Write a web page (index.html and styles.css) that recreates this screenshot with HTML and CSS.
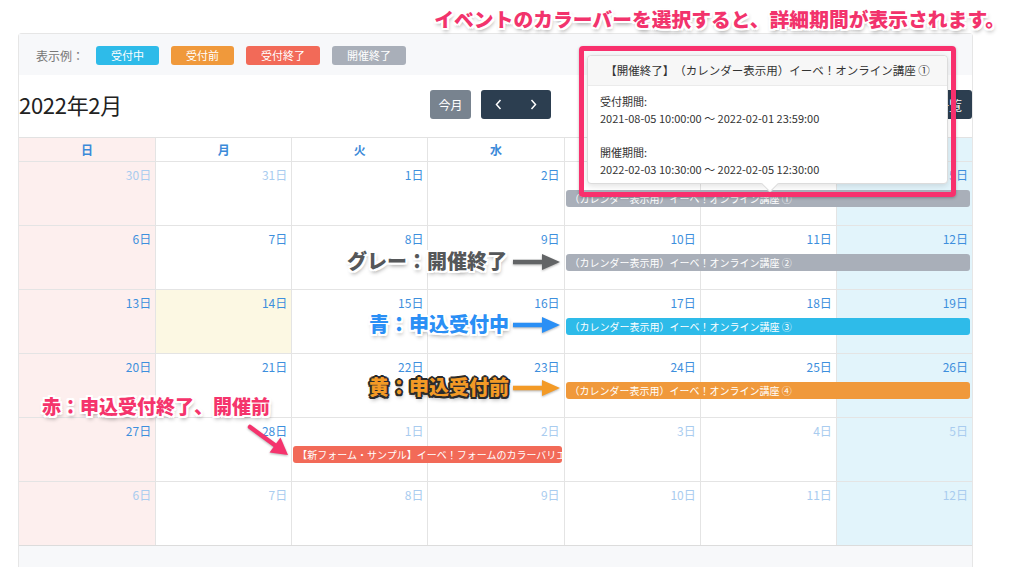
FILE: index.html
```html
<!DOCTYPE html>
<html lang="ja">
<head>
<meta charset="utf-8">
<title>カレンダー</title>
<link rel="stylesheet" href="styles.css">
</head>
<body>
<div class="page">
  <p class="note-top">イベントのカラーバーを選択すると、詳細期間が表示されます。</p>
  <div class="panel">
    <div class="legend">
      <span class="legend-label">表示例：</span>
      <span class="badge c-open">受付中</span>
      <span class="badge c-before">受付前</span>
      <span class="badge c-closed">受付終了</span>
      <span class="badge c-ended">開催終了</span>
    </div>
    <div class="toolbar">
      <h1 class="title">2022年2月</h1>
      <div class="tb-center">
        <button class="btn btn-today">今月</button>
        <div class="btn-group">
          <button class="btn btn-dark btn-nav"><svg width="7" height="11" viewBox="0 0 7 11"><path d="M5.5 1 L1.5 5.5 L5.5 10" fill="none" stroke="#fff" stroke-width="1.5"/></svg></button>
          <button class="btn btn-dark btn-nav"><svg width="7" height="11" viewBox="0 0 7 11"><path d="M1.5 1 L5.5 5.5 L1.5 10" fill="none" stroke="#fff" stroke-width="1.5"/></svg></button>
        </div>
      </div>
      <div class="tb-right"><button class="btn btn-dark btn-list">一覧</button></div>
    </div>
    <div class="calendar">
      <div class="dow">
        <div class="dow-cell sun">日</div><div class="dow-cell">月</div><div class="dow-cell">火</div><div class="dow-cell">水</div><div class="dow-cell">木</div><div class="dow-cell">金</div><div class="dow-cell sat">土</div>
      </div>
      <div class="week">
        <div class="day sun other">30日</div><div class="day other">31日</div><div class="day">1日</div><div class="day">2日</div><div class="day">3日</div><div class="day">4日</div><div class="day sat">5日</div>
        <div class="event c-ended ev-5-8">（カレンダー表示用）イーベ！オンライン講座 ①</div>
      </div>
      <div class="week">
        <div class="day sun">6日</div><div class="day">7日</div><div class="day">8日</div><div class="day">9日</div><div class="day">10日</div><div class="day">11日</div><div class="day sat">12日</div>
        <div class="event c-ended ev-5-8">（カレンダー表示用）イーベ！オンライン講座 ②</div>
      </div>
      <div class="week">
        <div class="day sun">13日</div><div class="day today">14日</div><div class="day">15日</div><div class="day">16日</div><div class="day">17日</div><div class="day">18日</div><div class="day sat">19日</div>
        <div class="event c-open ev-5-8">（カレンダー表示用）イーベ！オンライン講座 ③</div>
      </div>
      <div class="week">
        <div class="day sun">20日</div><div class="day">21日</div><div class="day">22日</div><div class="day">23日</div><div class="day">24日</div><div class="day">25日</div><div class="day sat">26日</div>
        <div class="event c-before ev-5-8">（カレンダー表示用）イーベ！オンライン講座 ④</div>
      </div>
      <div class="week">
        <div class="day sun">27日</div><div class="day">28日</div><div class="day other">1日</div><div class="day other">2日</div><div class="day other">3日</div><div class="day other">4日</div><div class="day sat other">5日</div>
        <div class="event c-closed ev-3-5">【新フォーム・サンプル】イーベ！フォームのカラーバリエーション</div>
      </div>
      <div class="week">
        <div class="day sun other">6日</div><div class="day other">7日</div><div class="day other">8日</div><div class="day other">9日</div><div class="day other">10日</div><div class="day other">11日</div><div class="day sat other">12日</div>
      </div>
    </div>
    <div class="panel-foot"></div>
  </div>

  <div class="popover">
    <div class="popover-head">【開催終了】（カレンダー表示用）イーベ！オンライン講座 ①</div>
    <div class="popover-body">
      <p>受付期間:</p>
      <p>2021-08-05 10:00:00 〜 2022-02-01 23:59:00</p>
      <p class="blank">&nbsp;</p>
      <p>開催期間:</p>
      <p>2022-02-03 10:30:00 〜 2022-02-05 12:30:00</p>
    </div>
    <span class="popover-arrow"></span>
  </div>
  <div class="frame"></div>

  <p class="anno anno-gray">グレー：開催終了</p>
  <p class="anno anno-blue">青：申込受付中</p>
  <p class="anno anno-yellow">黄：申込受付前</p>
  <p class="anno anno-red">赤：申込受付終了、開催前</p>

  <svg class="arrow arrow-gray" width="48" height="18" viewBox="0 0 48 18"><path d="M0 9 H32" stroke="#626466" stroke-width="4.5"/><path d="M29 1 L47 9 L29 17 Z" fill="#626466"/></svg>
  <svg class="arrow arrow-blue" width="48" height="18" viewBox="0 0 48 18"><path d="M0 9 H32" stroke="#2a8ff5" stroke-width="4.5"/><path d="M29 1 L47 9 L29 17 Z" fill="#2a8ff5"/></svg>
  <svg class="arrow arrow-orange" width="48" height="18" viewBox="0 0 48 18"><path d="M0 9 H32" stroke="#f39a26" stroke-width="4.5"/><path d="M29 1 L47 9 L29 17 Z" fill="#f39a26"/></svg>
  <svg class="arrow arrow-pink" width="50" height="40" viewBox="0 0 50 40"><path d="M6 7 L32 26" stroke="#f5336d" stroke-width="4.5" stroke-linecap="round"/><path d="M44 35 L25.5 32.5 L36.5 17.5 Z" fill="#f5336d"/></svg>
</div>
</body>
</html>
```

FILE: styles.css
```css
* { box-sizing: border-box; margin: 0; padding: 0; }
body { margin: 0; background: #fff; font-family: "Noto Sans CJK JP", "Noto Sans", sans-serif; color: #333; text-spacing-trim: space-all; }
.page { position: relative; width: 1024px; height: 567px; overflow: hidden; }

.note-top {
  height: 33px; padding-top: 7px; padding-right: 19px; text-align: right;
  font-size: 19.8px; line-height: 24px; font-weight: 900; color: #f2336c; white-space: nowrap;
  text-shadow: -2px -2px 0 #fff, 0 -2px 0 #fff, 2px -2px 0 #fff, 2px 0 0 #fff, 2px 2px 0 #fff, 0 2px 0 #fff, -2px 2px 0 #fff, -2px 0 0 #fff, 1px 3px 4px rgba(0,0,0,.45);
}

.panel { margin-left: 18px; width: 955px; height: 560px; border: 1px solid #e6e6e6; border-bottom: 0; border-radius: 4px 4px 0 0; }

.legend { height: 41px; background: #f7f8fa; display: flex; align-items: center; gap: 12px; padding-left: 17px; padding-top: 1px; }
.legend-label { font-size: 12px; color: #777; margin-right: 0; }
.badge { height: 19px; line-height: 19px; padding: 0 15px; border-radius: 3px; font-size: 11px; color: #fff; }
.c-open { background: #2ebbe9; }
.c-before { background: #f0993b; }
.c-closed { background: #f26a58; }
.c-ended { background: #a9afb9; }

.toolbar { height: 62px; display: grid; grid-template-columns: 1fr auto 1fr; align-items: center; padding-bottom: 4px; }
.title { font-size: 22px; font-weight: 400; color: #222; letter-spacing: -0.3px; }
.tb-center { display: flex; gap: 10px; margin-right: 10px; }
.tb-right { display: flex; justify-content: flex-end; }
.btn { height: 29px; border: 0; border-radius: 3px; font-family: inherit; font-size: 12px; color: #fff; display: flex; align-items: center; justify-content: center; }
.btn-today { width: 41px; background: #78838f; }
.btn-group { display: flex; border-radius: 3px; overflow: hidden; }
.btn-dark { background: #2c3e50; }
.btn-nav { width: 35px; border-radius: 0; }
.btn-list { padding: 0 10px; font-size: 13px; }

.calendar { border-top: 1px solid #e2e2e2; }
.dow { display: grid; grid-template-columns: repeat(7, 1fr); height: 23px; }
.dow-cell { text-align: center; font-size: 12px; font-weight: 700; color: #3b8ad9; line-height: 23px; border-left: 1px solid #e4e4e4; }
.dow-cell:first-child { border-left: 0; }
.sun { background: #fdefee; }
.sat { background: #e2f4fb; }

.week { display: grid; grid-template-columns: repeat(7, 1fr); grid-template-rows: 28px 17px 1fr; height: 64px; border-top: 1px solid #e4e4e4; }
.day { grid-row: 1 / -1; border-left: 1px solid #e4e4e4; text-align: right; padding: 5px 4px 0 0; font-size: 12px; line-height: 16px; color: #3d8fdd; }
.day:first-child { border-left: 0; }
.day:nth-child(1) { grid-column: 1; }
.day:nth-child(2) { grid-column: 2; }
.day:nth-child(3) { grid-column: 3; }
.day:nth-child(4) { grid-column: 4; }
.day:nth-child(5) { grid-column: 5; }
.day:nth-child(6) { grid-column: 6; }
.day:nth-child(7) { grid-column: 7; }
.day.other { color: #a9ccef; }
.day.today { background: #fcf8e3; }

.event { grid-row: 2; margin: 0 2px; border-radius: 3px; color: #fff; font-size: 10px; line-height: 17px; padding-left: 4px; white-space: nowrap; overflow: hidden; }
.ev-5-8 { grid-column: 5 / 8; }
.ev-3-5 { grid-column: 3 / 5; }

.panel-foot { height: 40px; background: #f7f8fa; border-top: 1px solid #dcdcdc; }

.popover { position: absolute; left: 587px; top: 55px; width: 361px; height: 129px; background: #fff; border: 1px solid #dcdcdc; border-radius: 4px; box-shadow: 0 2px 6px rgba(0,0,0,.12); }
.popover-head { height: 30px; line-height: 29px; background: #f7f7f7; border-bottom: 1px solid #ebebeb; border-radius: 4px 4px 0 0; text-align: center; font-size: 11.5px; color: #333; white-space: nowrap; }
.popover-body { padding: 7px 12px 8px; font-size: 11px; line-height: 17px; color: #333; }
.popover-arrow { position: absolute; left: 176px; bottom: -7px; width: 12px; height: 12px; background: #fff; border-right: 1px solid #dcdcdc; border-bottom: 1px solid #dcdcdc; transform: rotate(45deg); }

.frame { position: absolute; left: 579px; top: 46px; width: 377px; height: 151px; border: 5px solid #f8306d; border-radius: 4px; box-shadow: 0 1px 3px rgba(0,0,0,.25); }

.anno { position: absolute; font-weight: 900; white-space: nowrap; font-size: 20px; line-height: 22px; }
.anno-gray, .anno-blue, .anno-red {
  text-shadow: -2px -2px 0 #fff, 0 -2px 0 #fff, 2px -2px 0 #fff, 2px 0 0 #fff, 2px 2px 0 #fff, 0 2px 0 #fff, -2px 2px 0 #fff, -2px 0 0 #fff, 1px 3px 4px rgba(0,0,0,.45);
}
.anno-gray { left: 347px; top: 250px; color: #555759; }
.anno-blue { left: 369px; top: 313px; color: #2a8ff5; }
.anno-yellow { left: 369px; top: 376px; color: #f39a26;
  text-shadow: -1.5px -1.5px 0 #2b2b2b, 0 -2px 0 #2b2b2b, 1.5px -1.5px 0 #2b2b2b, 2px 0 0 #2b2b2b, 1.5px 1.5px 0 #2b2b2b, 0 2px 0 #2b2b2b, -1.5px 1.5px 0 #2b2b2b, -2px 0 0 #2b2b2b, 1px 3px 4px rgba(0,0,0,.4);
}
.anno-red { left: 42px; top: 395px; font-size: 19px; color: #f5346c; }

.arrow { position: absolute; filter: drop-shadow(0 1px 1px rgba(0,0,0,.3)); }
.arrow-gray { left: 513px; top: 253px; }
.arrow-blue { left: 513px; top: 316px; }
.arrow-orange { left: 513px; top: 379px; }
.arrow-pink { left: 244px; top: 420px; }
```
